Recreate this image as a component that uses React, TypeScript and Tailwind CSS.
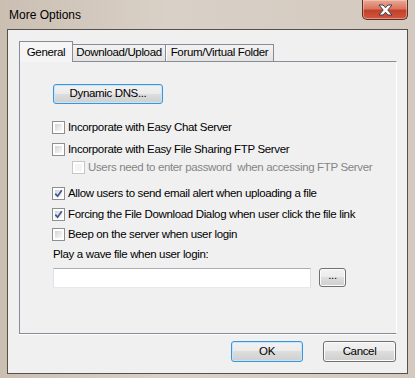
import type { ReactNode } from "react";

const font = { fontFamily: '"Liberation Sans", Arial, sans-serif' };

function CheckBox({ checked, disabled }: { checked?: boolean; disabled?: boolean }) {
  return (
    <span
      className={`flex h-[13px] w-[13px] shrink-0 items-center justify-center border bg-white p-[2px] ${
        disabled ? "border-[#c6c6c6]" : "border-[#8e8f8f]"
      }`}
    >
      <span
        className={`relative flex h-full w-full items-center justify-center ${
          disabled
            ? "bg-[#f4f4f4]"
            : "bg-[linear-gradient(135deg,#cfd2d7_0%,#e6e7ea_50%,#fafafa_100%)]"
        }`}
      >
        {checked && (
          <svg width="9" height="9" viewBox="0 0 9 9" className="absolute">
            <path d="M1.3 4.6 L3.6 7.2 L7.8 1.2" fill="none" stroke="#3f5690" strokeWidth="1.7" />
          </svg>
        )}
      </span>
    </span>
  );
}

function Row({
  checked,
  disabled,
  className,
  children,
}: {
  checked?: boolean;
  disabled?: boolean;
  className: string;
  children: ReactNode;
}) {
  return (
    <div className={`flex h-[13px] items-center gap-[3px] ${className}`}>
      <CheckBox checked={checked} disabled={disabled} />
      <span className={`whitespace-nowrap leading-none ${disabled ? "text-[#858585]" : "text-black"}`}>
        {children}
      </span>
    </div>
  );
}

function WinButton({
  focused,
  className,
  children,
}: {
  focused?: boolean;
  className: string;
  children: ReactNode;
}) {
  return (
    <button
      className={`flex items-center justify-center rounded-[3px] border bg-[linear-gradient(#f2f2f2_0%,#ebebeb_49%,#dddddd_50%,#cfcfcf_100%)] leading-none text-black ${
        focused
          ? "border-[#3d95d8] shadow-[inset_0_0_0_1px_#c4e6fa]"
          : "border-[#707070] shadow-[inset_0_0_0_1px_#fcfcfc]"
      } ${className}`}
    >
      {children}
    </button>
  );
}

export default function App() {
  return (
    <div
      className="flex h-[378px] w-[415px] flex-col overflow-hidden bg-[linear-gradient(90deg,#cbbfb2_0%,#d9d0c7_40%,#d3c9bf_100%)] text-[11.5px] tracking-[-0.35px]"
      style={font}
    >
      {/* title bar */}
      <div className="flex h-[29px] shrink-0 items-start justify-between">
        <div className="pl-[9px] pt-[9px] text-[12px] leading-none tracking-normal text-black">More Options</div>
        <div className="mr-[7px] flex h-[20px] w-[46px] items-center justify-center rounded-b-[5px] border border-t-0 border-[#5b2f26] bg-[linear-gradient(#e9a996_0%,#d9775f_45%,#c4402a_55%,#d0583f_100%)] shadow-[inset_0_0_0_1px_rgba(255,220,210,0.45)]">
          <svg width="15" height="12" viewBox="0 0 15 12">
            <path
              d="M1 1 H5 L7.5 3.8 L10 1 H14 L9.8 6 L14 11 H10 L7.5 8.2 L5 11 H1 L5.2 6 Z"
              fill="#ffffff"
              stroke="#3d3d48"
              strokeWidth="1"
              strokeLinejoin="round"
            />
          </svg>
        </div>
      </div>

      {/* client area */}
      <div className="ml-[7px] flex h-[345px] w-[401px] flex-col border border-[#55504a] bg-[#f0f0f0] pl-[11px] pr-[10px] pt-[11px]">
        {/* tabs */}
        <div className="relative z-10 flex h-[20px] items-end whitespace-nowrap">
          <div className="mb-[-1px] flex h-[21px] w-[54px] items-start justify-center border border-b-0 border-[#898c95] bg-[#f5f5f5] pt-[5px] leading-none">
            General
          </div>
          <div className="flex h-[17px] w-[93px] items-center justify-center border border-l-0 border-b-0 border-[#898c95] bg-[linear-gradient(#f3f3f3,#e3e3e3)]">
            Download/Upload
          </div>
          <div className="flex h-[17px] w-[108px] items-center justify-center border border-l-0 border-b-0 border-[#898c95] bg-[linear-gradient(#f3f3f3,#e3e3e3)] shadow-[inset_1px_0_0_#ffffff]">
            Forum/Virtual Folder
          </div>
        </div>

        {/* tab panel */}
        <div className="flex h-[273px] flex-col border border-r-white border-[#898c95] bg-[#f0f0f0] pl-[32px] shadow-[0_1px_0_#ffffff]">
          <WinButton focused className="ml-[1px] mt-[22px] h-[20px] w-[110px]">
            Dynamic DNS...
          </WinButton>
          <Row className="mt-[17px]">Incorporate with Easy Chat Server</Row>
          <Row className="mt-[9px]">Incorporate with Easy File Sharing FTP Server</Row>
          <Row disabled className="ml-[20px] mt-[5px]">
            Users need to enter password&nbsp; when accessing FTP Server
          </Row>
          <Row checked className="mt-[13px]">
            Allow users to send email alert when uploading a file
          </Row>
          <Row checked className="mt-[8px]">
            Forcing the File Download Dialog when user click the file link
          </Row>
          <Row className="mt-[7px]">Beep on the server when user login</Row>
          <div className="ml-[1px] mt-[8px] leading-none">Play a wave file when user login:</div>
          <div className="ml-[1px] mt-[7px] flex items-center gap-[8px]">
            <div className="h-[20px] w-[258px] border border-[#abadb3] border-l-[#e2e3ea] border-r-[#dbdfe6] border-b-[#e3e9ef] bg-white" />
            <WinButton className="h-[19px] w-[27px] pb-[4px]">...</WinButton>
          </div>
        </div>

        {/* dialog buttons */}
        <div className="mt-[7px] flex justify-end gap-[20px] pr-[1px]">
          <WinButton focused className="h-[21px] w-[72px]">
            OK
          </WinButton>
          <WinButton className="h-[21px] w-[73px]">Cancel</WinButton>
        </div>
      </div>
    </div>
  );
}
